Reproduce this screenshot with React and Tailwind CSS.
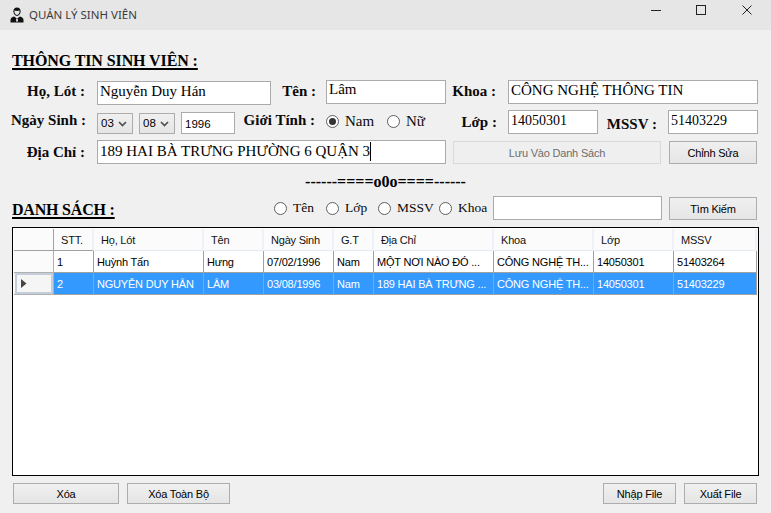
const serif = { fontFamily: '"Liberation Serif", serif' };

function Label({ w, ml = 0, className = "", children }) {
  return (
    <div style={{ width: w, marginLeft: ml }} className={`shrink-0 text-right font-bold text-[15px] leading-none whitespace-nowrap text-[#0a0a0a] ${className}`}>
      {children}
    </div>
  );
}

function Field({ w, h = 24, ml = 0, mt = 0, size = 15, children, pl = 2 }) {
  return (
    <div style={{ width: w, height: h, marginLeft: ml, marginTop: mt, fontSize: size, paddingLeft: pl }} className="shrink-0 border border-[#ababad] bg-white text-black leading-[19px] whitespace-nowrap overflow-hidden flex">
      {children}
    </div>
  );
}

function Btn({ w, h = 23, ml = 0, mt = 0, disabled, children }) {
  return (
    <button style={{ width: w, height: h, marginLeft: ml, marginTop: mt }} className={`shrink-0 border pt-[2px] text-[11px] tracking-[-0.2px] font-['Liberation_Sans',sans-serif] whitespace-nowrap ${disabled ? "border-[#d9d9d9] bg-[#efefef] text-[#6d6d6d]" : "border-[#adadad] bg-gradient-to-b from-[#f0f0f0] to-[#e5e5e5] text-black"}`}>
      {children}
    </button>
  );
}

function Radio({ checked, ml = 0 }) {
  return (
    <span style={{ marginLeft: ml }} className="shrink-0 w-[13px] h-[13px] rounded-full border border-[#5f5f5f] bg-white flex items-center justify-center">
      {checked && <span className="w-[7px] h-[7px] rounded-full bg-[#333333]" />}
    </span>
  );
}

function Select({ value, ml = 0 }) {
  return (
    <div style={{ marginLeft: ml }} className="shrink-0 w-[36px] h-[21px] mt-[3px] border border-[#acacac] bg-gradient-to-b from-[#f0f0f0] to-[#e5e5e5] flex items-center justify-between pl-[3px] pr-[5px] text-[11.5px] text-black font-['Liberation_Sans',sans-serif]">
      <span className="mt-[1px]">{value}</span>
      <svg width="9" height="6" viewBox="0 0 9 6" fill="none"><path d="M1 1l3.500 3.500L8 1" stroke="#505050" strokeWidth="1.700" /></svg>
    </div>
  );
}

const cols = [40, 40, 110, 60, 70, 40, 120, 100, 80, 83];
const heads = ["", "STT.", "Họ, Lót", "Tên", "Ngày Sinh", "G.T", "Địa Chỉ", "Khoa", "Lớp", "MSSV"];
const rows = [
  ["1", "Huỳnh Tấn", "Hưng", "07/02/1996", "Nam", "MỘT NƠI NÀO ĐÓ ...", "CÔNG NGHỆ TH...", "14050301", "51403264"],
  ["2", "NGUYỄN DUY HÂN", "LÂM", "03/08/1996", "Nam", "189 HAI BÀ TRƯNG ...", "CÔNG NGHỆ TH...", "14050301", "51403229"],
];

function Table() {
  return (
    <div className="ml-[12px] mt-[7px] w-[747px] h-[249px] border border-black bg-white pl-px pt-px font-['Liberation_Sans',sans-serif] text-[11px] tracking-[-0.2px] overflow-hidden">
      <div className="flex h-[22px] bg-[#fbfbfb]">
        {heads.map((h, i) => (
          <div key={i} style={{ width: cols[i] }} className={`shrink-0 h-[22px] leading-[23px] pl-[7px] border-b whitespace-nowrap text-[#111] ${i < 2 ? "border-[#a0a0a0]" : "border-[#e3e9f1]"} ${i === 0 ? "border-r border-r-[#a0a0a0]" : "border-r-2 border-r-[#eef2f8]"}`}>
            {h}
          </div>
        ))}
      </div>
      {rows.map((r, ri) => {
        const sel = ri === 1;
        return (
          <div key={ri} className="flex h-[22px]">
            <div className="shrink-0 w-[40px] h-[22px] bg-[#fbfbfb] border-b border-r border-[#b0b0b0] flex items-center">
              {sel && <div className="w-[39px] h-[21px] ml-px border-2 border-[#c4cedb] bg-[#f5f5f5] flex items-center pl-[4px]"><svg width="6" height="9" viewBox="0 0 6 9"><path d="M0 0l5.500 4.500L0 9z" fill="#444" /></svg></div>}
            </div>
            {r.map((c, i) => (
              <div key={i} style={{ width: cols[i + 1] }} className={`shrink-0 h-[22px] leading-[23px] pl-[3px] border-r border-b border-[#a0a0a0] whitespace-nowrap ${sel ? "bg-[#3399ff] text-white" : "bg-white text-black"}`}>
                {c}
              </div>
            ))}
          </div>
        );
      })}
    </div>
  );
}

export default function App() {
  return (
    <div style={serif} className="w-[771px] h-[513px] bg-[#f0f0f0] overflow-hidden">
      <div className="h-[30px] bg-[#e6e6e6] flex items-center pl-[10px] pr-[9px]">
        <svg width="14" height="16" viewBox="0 0 14 16"><path d="M7 .5c2.200 0 3.600 1.500 3.600 3.800 0 2.500-1.500 4.700-3.600 4.700S3.400 6.800 3.400 4.300C3.400 2 4.800.5 7 .5z" fill="#111" /><path d="M4.500 3.500c1.500.5 3.500.5 5 0l.1 1.500c-.5 1.800-1.500 3-2.600 3S4.900 6.800 4.400 5z" fill="#e8e8e8" /><path d="M4 9.500l3 2 3-2c2 .5 3.500 1.500 3.500 3.500v2.500H.5V13c0-2 1.500-3 3.500-3.500z" fill="#111" /><path d="M6.300 11.500h1.400l.3 3H6z" fill="#e8e8e8" /></svg>
        <span className="ml-[5px] text-[11.500px] text-[#3c3c3c] font-['Noto_Sans',sans-serif] whitespace-nowrap">QUẢN LÝ SINH VIÊN</span>
        <svg className="ml-auto" width="121" height="30" viewBox="0 0 121 30" fill="none" stroke="#222" strokeWidth="1">
          <path d="M10 10.500h10" />
          <rect x="55.500" y="5.500" width="9" height="9" />
          <path d="M101.500 5.500l9 9M110.500 5.500l-9 9" />
        </svg>
      </div>

      <div className="ml-[12px] mt-[21px] h-[19px] text-[16px] leading-[19px] tracking-[-0.1px] font-bold text-black underline underline-offset-2 decoration-2 whitespace-nowrap">THÔNG TIN SINH VIÊN :</div>

      <div className="flex items-start mt-[10px] h-[25px]">
        <Label w={85} className="mt-[4px]">Họ, Lót :</Label>
        <Field w={174} ml={12} mt={1}>Nguyễn Duy Hán</Field>
        <Label w={45} className="mt-[4px]">Tên :</Label>
        <Field w={120} ml={10}><span className="-mt-px">Lâm</span></Field>
        <Label w={50} className="mt-[4px]">Khoa :</Label>
        <Field w={250} ml={12}>CÔNG NGHỆ THÔNG TIN</Field>
      </div>

      <div className="flex items-start mt-[5px] h-[25px]">
        <Label w={86} className="mt-[3px]">Ngày Sinh :</Label>
        <Select ml={11} value="03" />
        <Select ml={6} value="08" />
        <div style={{ width: 54, height: 22, marginLeft: 6, marginTop: 2 }} className="shrink-0 border border-[#ababad] bg-white pl-[3px] text-[11.500px] leading-[22px] font-['Liberation_Sans',sans-serif]">1996</div>
        <Label w={80} className="mt-[3px]">Giới Tính :</Label>
        <div className="flex items-center h-[23px] text-[15px] text-[#0a0a0a]">
          <Radio ml={11} checked />
          <span className="ml-[6px] w-[42px]">Nam</span>
          <Radio checked={false} />
          <span className="ml-[6px]">Nữ</span>
        </div>
        <Label w={72} className="mt-[5px]">Lớp :</Label>
        <Field w={90} ml={11} size={14}>14050301</Field>
        <Label w={59} className="mt-[7px]">MSSV :</Label>
        <Field w={90} ml={11} size={14}>51403229</Field>
      </div>

      <div className="flex items-start mt-[5px] h-[25px]">
        <Label w={85} className="mt-[5px]">Địa Chỉ :</Label>
        <Field w={349} ml={12} mt={0}><span className="mt-px flex">189 HAI BÀ TRƯNG PHƯỜNG 6 QUẬN 3<span className="w-px h-[19px] bg-black" /></span></Field>
        <Btn w={208} ml={7} mt={1} disabled>Lưu Vào Danh Sách</Btn>
        <Btn w={88} ml={8} mt={1}>Chỉnh Sửa</Btn>
      </div>

      <div className="mt-[10px] h-[14px] text-center text-[16px] leading-[14px] font-bold text-black">------====o0o====------</div>

      <div className="flex items-start mt-[7px]">
        <div className="ml-[12px] mt-[4px] w-[262px] text-[16px] leading-[19px] tracking-[-0.2px] font-bold text-black underline underline-offset-2 decoration-2 whitespace-nowrap">DANH SÁCH :</div>
        <div className="flex items-center h-[24px] text-[13.500px] text-[#0a0a0a] whitespace-nowrap">
          <Radio />
          <span className="ml-[6px] w-[33px]">Tên</span>
          <Radio />
          <span className="ml-[6px] w-[33px]">Lớp</span>
          <Radio />
          <span className="ml-[6px] w-[42px]">MSSV</span>
          <Radio />
          <span className="ml-[6px] w-[35px]">Khoa</span>
        </div>
        <div className="shrink-0 w-[169px] h-[24px] border border-[#ababad] bg-white" />
        <Btn w={88} ml={7} mt={1}>Tìm Kiếm</Btn>
      </div>

      <Table />

      <div className="flex items-start mt-[7px] ml-[13px]">
        <Btn w={106} h={21}>Xóa</Btn>
        <Btn w={103} h={21} ml={8}>Xóa Toàn Bộ</Btn>
        <Btn w={73} h={21} ml={373}>Nhập File</Btn>
        <Btn w={73} h={21} ml={8}>Xuất File</Btn>
      </div>
    </div>
  );
}
